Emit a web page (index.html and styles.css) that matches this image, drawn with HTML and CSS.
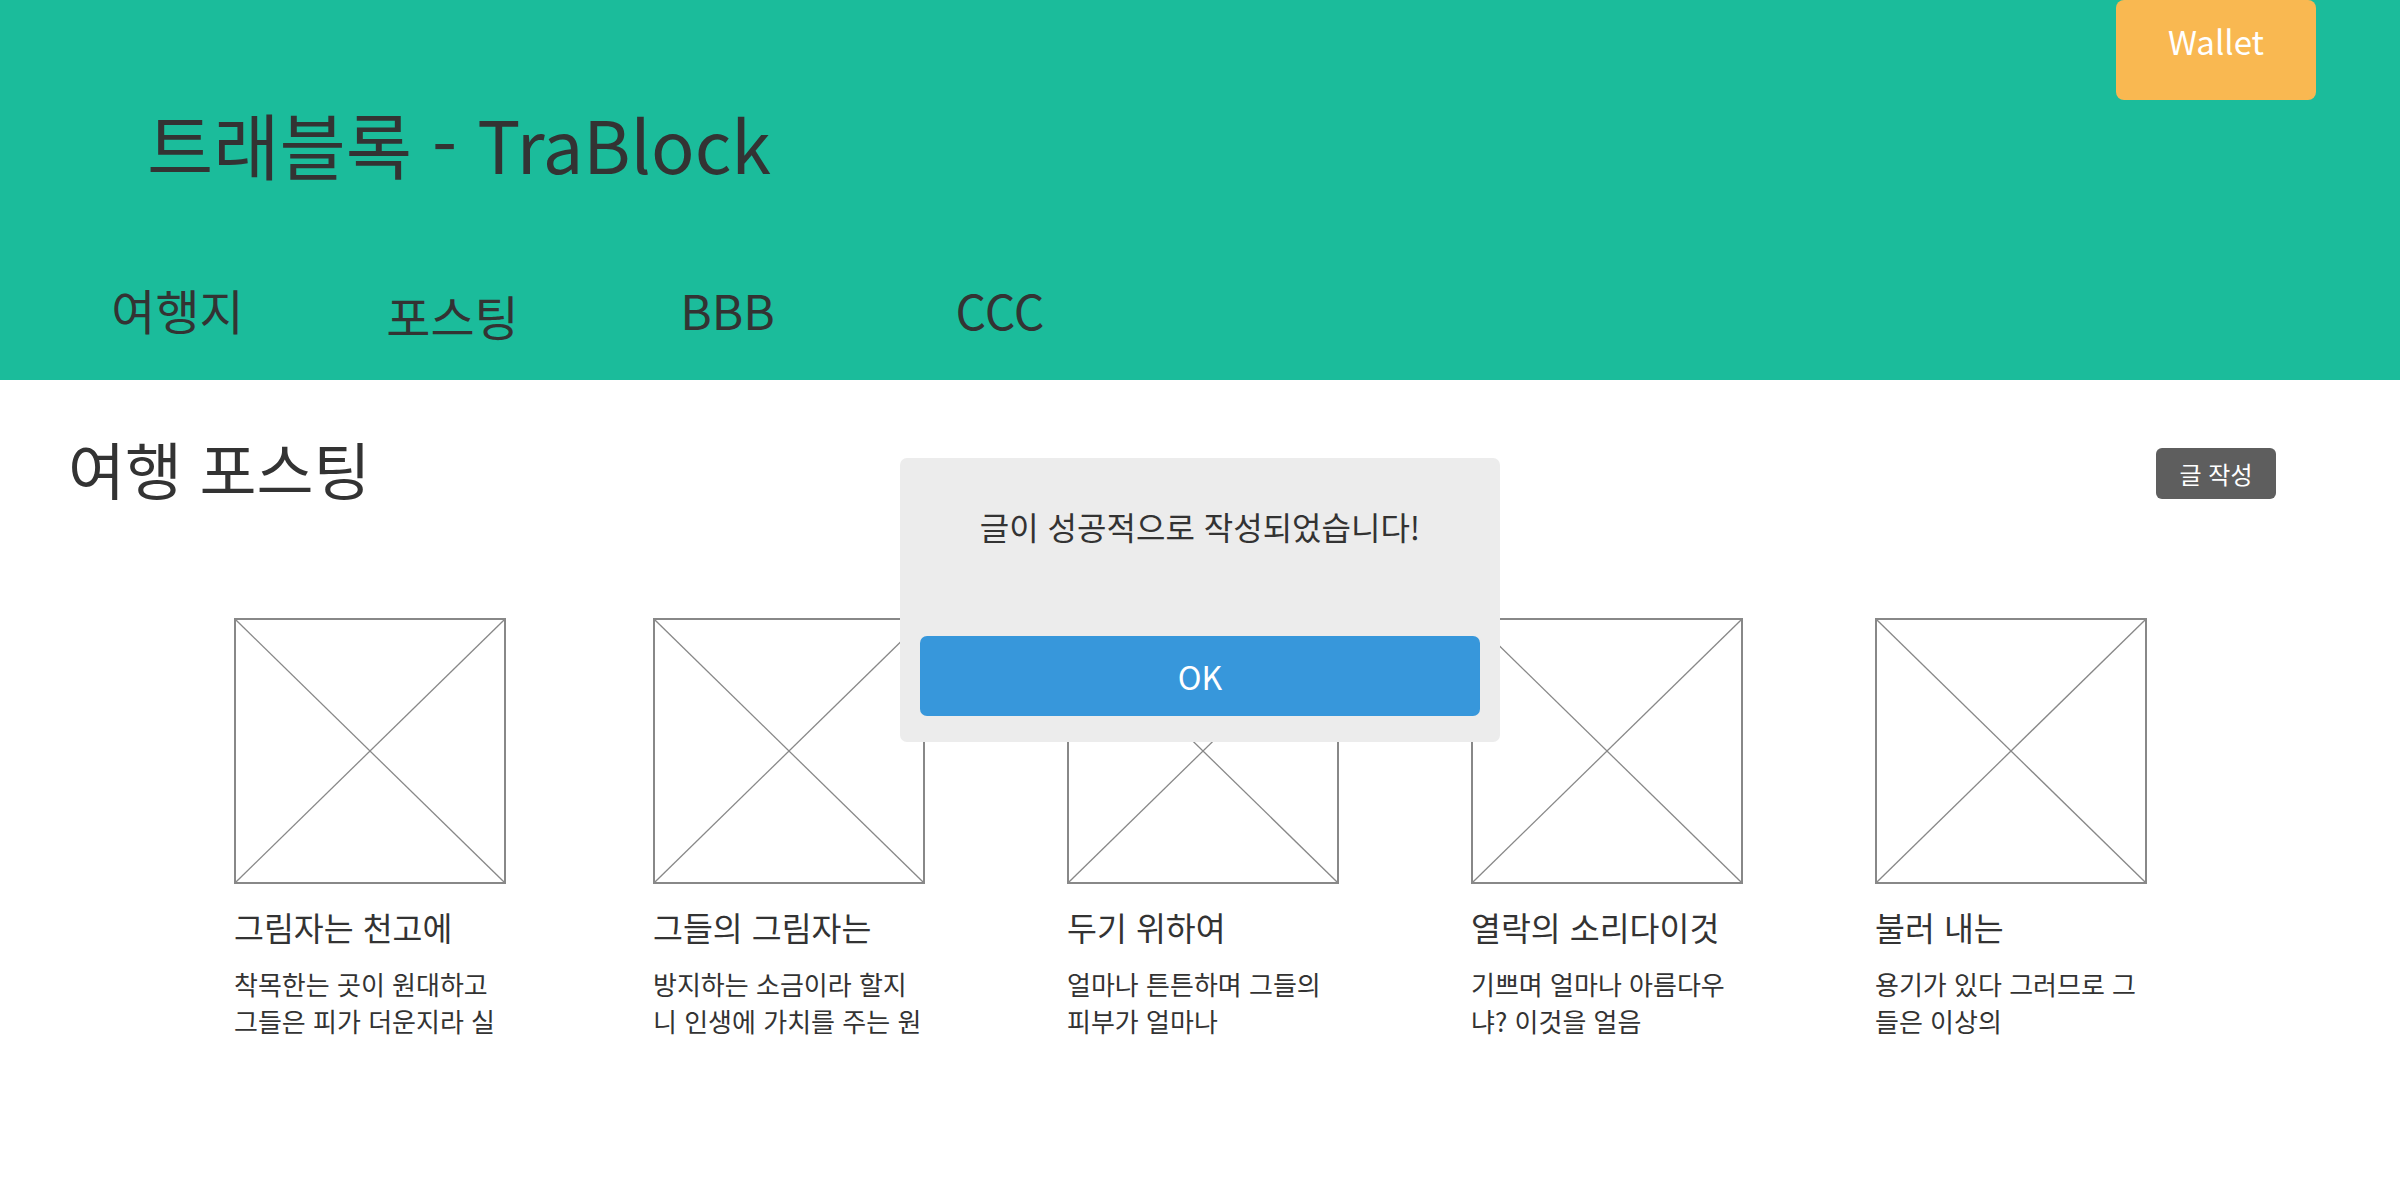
FILE: index.html
```html
<!DOCTYPE html>
<html lang="ko">
<head>
<meta charset="utf-8">
<title>트래블록 - TraBlock</title>
<link rel="stylesheet" href="styles.css">
</head>
<body>
<header class="top">
  <a class="wallet" href="#">Wallet</a>
  <h1 class="brand">트래블록 - TraBlock</h1>
  <nav class="menu">
    <a class="menu-item" href="#">여행지</a>
    <a class="menu-item menu-item--low" href="#">포스팅</a>
    <a class="menu-item" href="#">BBB</a>
    <a class="menu-item" href="#">CCC</a>
  </nav>
</header>

<main class="content">
  <div class="content-head">
    <h2 class="content-title">여행 포스팅</h2>
    <button class="write-btn" type="button">글 작성</button>
  </div>

  <div class="cards">
    <article class="card">
      <div class="thumb"><svg viewBox="0 0 100 100" preserveAspectRatio="none"><line x1="0" y1="0" x2="100" y2="100"/><line x1="100" y1="0" x2="0" y2="100"/></svg></div>
      <h3 class="card-title">그림자는 천고에</h3>
      <p class="card-text"><span class="line">착목한는 곳이 원대하고</span><span class="line">그들은 피가 더운지라 실</span></p>
    </article>
    <article class="card">
      <div class="thumb"><svg viewBox="0 0 100 100" preserveAspectRatio="none"><line x1="0" y1="0" x2="100" y2="100"/><line x1="100" y1="0" x2="0" y2="100"/></svg></div>
      <h3 class="card-title">그들의 그림자는</h3>
      <p class="card-text"><span class="line">방지하는 소금이라 할지</span><span class="line">니 인생에 가치를 주는 원</span></p>
    </article>
    <article class="card">
      <div class="thumb"><svg viewBox="0 0 100 100" preserveAspectRatio="none"><line x1="0" y1="0" x2="100" y2="100"/><line x1="100" y1="0" x2="0" y2="100"/></svg></div>
      <h3 class="card-title">두기 위하여</h3>
      <p class="card-text"><span class="line">얼마나 튼튼하며 그들의</span><span class="line">피부가 얼마나</span></p>
    </article>
    <article class="card">
      <div class="thumb"><svg viewBox="0 0 100 100" preserveAspectRatio="none"><line x1="0" y1="0" x2="100" y2="100"/><line x1="100" y1="0" x2="0" y2="100"/></svg></div>
      <h3 class="card-title">열락의 소리다이것</h3>
      <p class="card-text"><span class="line">기쁘며 얼마나 아름다우</span><span class="line">냐? 이것을 얼음</span></p>
    </article>
    <article class="card">
      <div class="thumb"><svg viewBox="0 0 100 100" preserveAspectRatio="none"><line x1="0" y1="0" x2="100" y2="100"/><line x1="100" y1="0" x2="0" y2="100"/></svg></div>
      <h3 class="card-title">불러 내는</h3>
      <p class="card-text"><span class="line">용기가 있다 그러므로 그</span><span class="line">들은 이상의</span></p>
    </article>
  </div>
</main>

<div class="alert" role="dialog">
  <p class="alert-text">글이 성공적으로 작성되었습니다!</p>
  <button class="alert-btn" type="button">OK</button>
</div>
</body>
</html>
```

FILE: styles.css
```css
* { box-sizing: border-box; }

html, body {
  margin: 0;
  padding: 0;
  background: #ffffff;
}

body {
  font-family: "Noto Sans CJK KR", "Noto Sans", sans-serif;
  color: #333333;
}

a { color: inherit; text-decoration: none; }

.top {
  position: relative;
  height: 380px;
  background: #1bbc9b;
  padding-top: 107px;
}

.wallet {
  position: absolute;
  top: 0;
  right: 84px;
  width: 200px;
  height: 100px;
  padding-top: 21px;
  background: #f9b851;
  border-radius: 8px;
  color: #ffffff;
  font-size: 33px;
  line-height: 40px;
  text-align: center;
}

.brand {
  margin: 0;
  padding-left: 147px;
  font-size: 72px;
  line-height: 72px;
  font-weight: 400;
  color: #333333;
}

.menu {
  display: flex;
  align-items: flex-start;
  margin-top: 106px;
  padding-left: 40px;
}

.menu-item {
  width: 275px;
  text-align: center;
  font-size: 48px;
  line-height: 48px;
  color: #333333;
}

.menu-item:last-child {
  width: 270px;
}

.menu-item--low {
  padding-top: 6px;
}

.content {
  padding: 57px 124px 0 68px;
}

.content-head {
  display: flex;
  justify-content: space-between;
  align-items: flex-start;
}

.content-title {
  margin: 0;
  font-size: 62px;
  line-height: 62px;
  font-weight: 400;
}

.write-btn {
  margin-top: 11px;
  width: 120px;
  height: 51px;
  border: 0;
  border-radius: 6px;
  background: #5e5e5e;
  color: #ffffff;
  font-family: inherit;
  font-size: 24px;
  line-height: 51px;
  padding: 0;
}

.cards {
  display: grid;
  grid-template-columns: 419px 414px 404px 404px 272px;
  margin-top: 119px;
  margin-left: 166px;
}

.thumb {
  width: 272px;
  height: 266px;
  border: 2px solid #888888;
}

.thumb svg {
  display: block;
  width: 100%;
  height: 100%;
}

.thumb line {
  stroke: #888888;
  stroke-width: 1.3px;
  vector-effect: non-scaling-stroke;
}

.card-title {
  margin: 23px 0 0;
  font-size: 32.5px;
  line-height: 40px;
  font-weight: 400;
}

.card-text {
  margin: 18px 0 0;
  font-size: 26px;
  line-height: 37px;
}

.line { display: block; white-space: nowrap; }

.alert {
  position: absolute;
  left: 900px;
  top: 458px;
  width: 600px;
  height: 284px;
  padding: 48px 20px 0;
  background: #ececec;
  border-radius: 7px;
  text-align: center;
}

.alert-text {
  margin: 0;
  font-size: 32px;
  line-height: 40px;
  color: #333333;
}

.alert-btn {
  display: block;
  margin-top: 90px;
  width: 560px;
  height: 80px;
  border: 0;
  border-radius: 7px;
  background: #3797db;
  color: #ffffff;
  font-family: inherit;
  font-size: 32px;
  line-height: 80px;
  padding: 0;
}
```
